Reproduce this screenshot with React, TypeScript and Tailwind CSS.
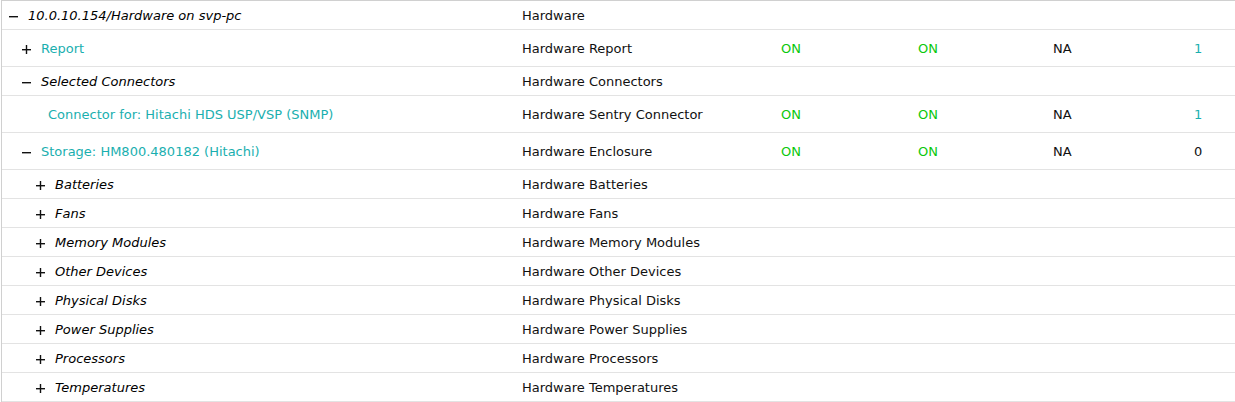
import React from 'react';

type Row = {
  label: string;
  type: string;
  toggle?: '+' | '-';
  indent: number; // x of toggle (or text when no toggle)
  italic?: boolean;
  link?: boolean;
  tall?: boolean;
  values?: [string, string, string, string];
  countLink?: boolean;
};

const rows: Row[] = [
  { label: '10.0.10.154/Hardware on svp-pc', type: 'Hardware', toggle: '-', indent: 7, italic: true },
  { label: 'Report', type: 'Hardware Report', toggle: '+', indent: 20, link: true, tall: true, values: ['ON', 'ON', 'NA', '1'], countLink: true },
  { label: 'Selected Connectors', type: 'Hardware Connectors', toggle: '-', indent: 20, italic: true },
  { label: 'Connector for: Hitachi HDS USP/VSP (SNMP)', type: 'Hardware Sentry Connector', indent: 46, link: true, tall: true, values: ['ON', 'ON', 'NA', '1'], countLink: true },
  { label: 'Storage: HM800.480182 (Hitachi)', type: 'Hardware Enclosure', toggle: '-', indent: 20, link: true, tall: true, values: ['ON', 'ON', 'NA', '0'] },
  { label: 'Batteries', type: 'Hardware Batteries', toggle: '+', indent: 34, italic: true },
  { label: 'Fans', type: 'Hardware Fans', toggle: '+', indent: 34, italic: true },
  { label: 'Memory Modules', type: 'Hardware Memory Modules', toggle: '+', indent: 34, italic: true },
  { label: 'Other Devices', type: 'Hardware Other Devices', toggle: '+', indent: 34, italic: true },
  { label: 'Physical Disks', type: 'Hardware Physical Disks', toggle: '+', indent: 34, italic: true },
  { label: 'Power Supplies', type: 'Hardware Power Supplies', toggle: '+', indent: 34, italic: true },
  { label: 'Processors', type: 'Hardware Processors', toggle: '+', indent: 34, italic: true },
  { label: 'Temperatures', type: 'Hardware Temperatures', toggle: '+', indent: 34, italic: true },
];

function Toggle({ kind }: { kind: '+' | '-' }) {
  return (
    <svg width="9" height="9" viewBox="0 0 9 9" className="shrink-0">
      <rect x="0" y="4" width="9" height="1.4" fill="#111" />
      {kind === '+' && <rect x="3.8" y="0" width="1.4" height="9" fill="#111" />}
    </svg>
  );
}

export default function App() {
  return (
    <div className="w-[1235px] h-[402px] bg-white overflow-hidden font-['DejaVu_Sans',Verdana,sans-serif] text-[13px] text-black">
      <div className="ml-px border-l border-t border-[#d0d0d0]">
        {rows.map((row, i) => (
          <div
            key={i}
            className={`grid grid-cols-[520px_259px_137px_135px_141px_1fr] items-center border-b border-[#e3e3e3] pt-[2px] ${row.tall ? 'h-[37px]' : 'h-[29px]'}`}
          >
            <div className="flex items-center gap-[10px] whitespace-nowrap" style={{ paddingLeft: row.indent }}>
              {row.toggle && <Toggle kind={row.toggle} />}
              <span className={`${row.italic ? 'italic' : ''} ${row.link ? 'text-[#1aafaf]' : 'text-black'}`}>{row.label}</span>
            </div>
            <div className="whitespace-nowrap text-[#111]">{row.type}</div>
            {row.values ? (
              <>
                <div className="text-[#0cc80c]">{row.values[0]}</div>
                <div className="text-[#0cc80c]">{row.values[1]}</div>
                <div className="text-[#111]">{row.values[2]}</div>
                <div className={row.countLink ? 'text-[#1aafaf]' : 'text-[#111]'}>{row.values[3]}</div>
              </>
            ) : (
              <>
                <div />
                <div />
                <div />
                <div />
              </>
            )}
          </div>
        ))}
      </div>
    </div>
  );
}
